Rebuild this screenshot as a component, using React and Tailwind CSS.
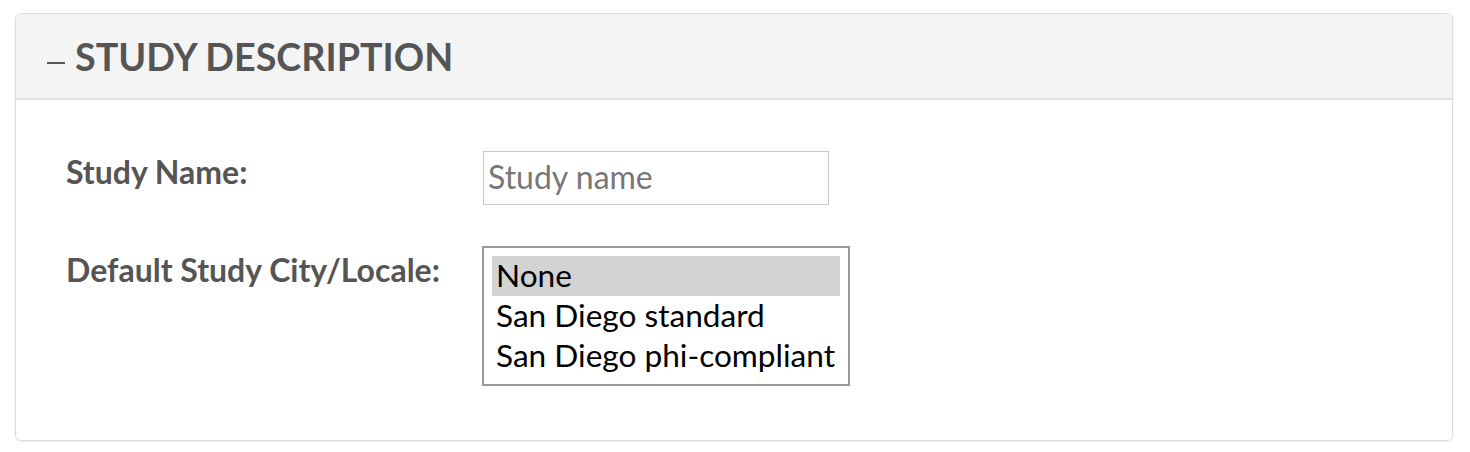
import React from "react";

const locales = ["None", "San Diego standard", "San Diego phi-compliant"];

export default function App() {
    return (
        <div className="bg-white w-[1470px] h-[452px] pt-[13px] pl-[15px]" style={{ fontFamily: "Lato, 'Liberation Sans', sans-serif" }}>
            <div className="w-[1438px] h-[428px] border border-[#dcdcdc] rounded-[6px] shadow-[0_1px_2px_rgba(0,0,0,0.08)] overflow-hidden">

                {/* Panel header */}
                <div className="h-[86px] bg-[#f4f4f4] border-b-2 border-[#e0e0e0] flex items-start pl-[31px] pt-[20px]">
                    <span className="inline-block w-[18px] h-[2px] bg-[#555] mt-[28px] mr-[10px]" />
                    <h2 className="text-[37.7px] leading-[1.2] font-bold text-[#555]">
                        STUDY DESCRIPTION
                    </h2>
                </div>

                {/* Panel body */}
                <div className="pl-[50px] pt-[51px]">
                    <div className="flex">
                        <label className="w-[417px] pt-[2px] text-[32px] leading-[1.2] font-bold text-[#555]">
                            Study Name:
                        </label>
                        <div className="w-[346px] h-[54px] border border-[#c8c8c8] pl-[4px] pt-[6px] text-[32px] leading-[1.2] text-[#777]">
                            Study name
                        </div>
                    </div>

                    <div className="flex mt-[41px]">
                        <label className="w-[416px] pt-[5px] text-[32px] leading-[1.2] font-bold text-[#555]">
                            Default Study City/Locale:
                        </label>
                        <div className="w-[368px] h-[140px] border-2 border-[#999] p-[8px]">
                            {locales.map((opt, i) => (
                                <div
                                    key={opt}
                                    className={"h-[40px] leading-[38px] pl-[4px] text-[31.6px] text-black " + (i === 0 ? "bg-[#d3d3d3]" : "")}
                                >
                                    {opt}
                                </div>
                            ))}
                        </div>
                    </div>
                </div>

            </div>
        </div>
    );
}
